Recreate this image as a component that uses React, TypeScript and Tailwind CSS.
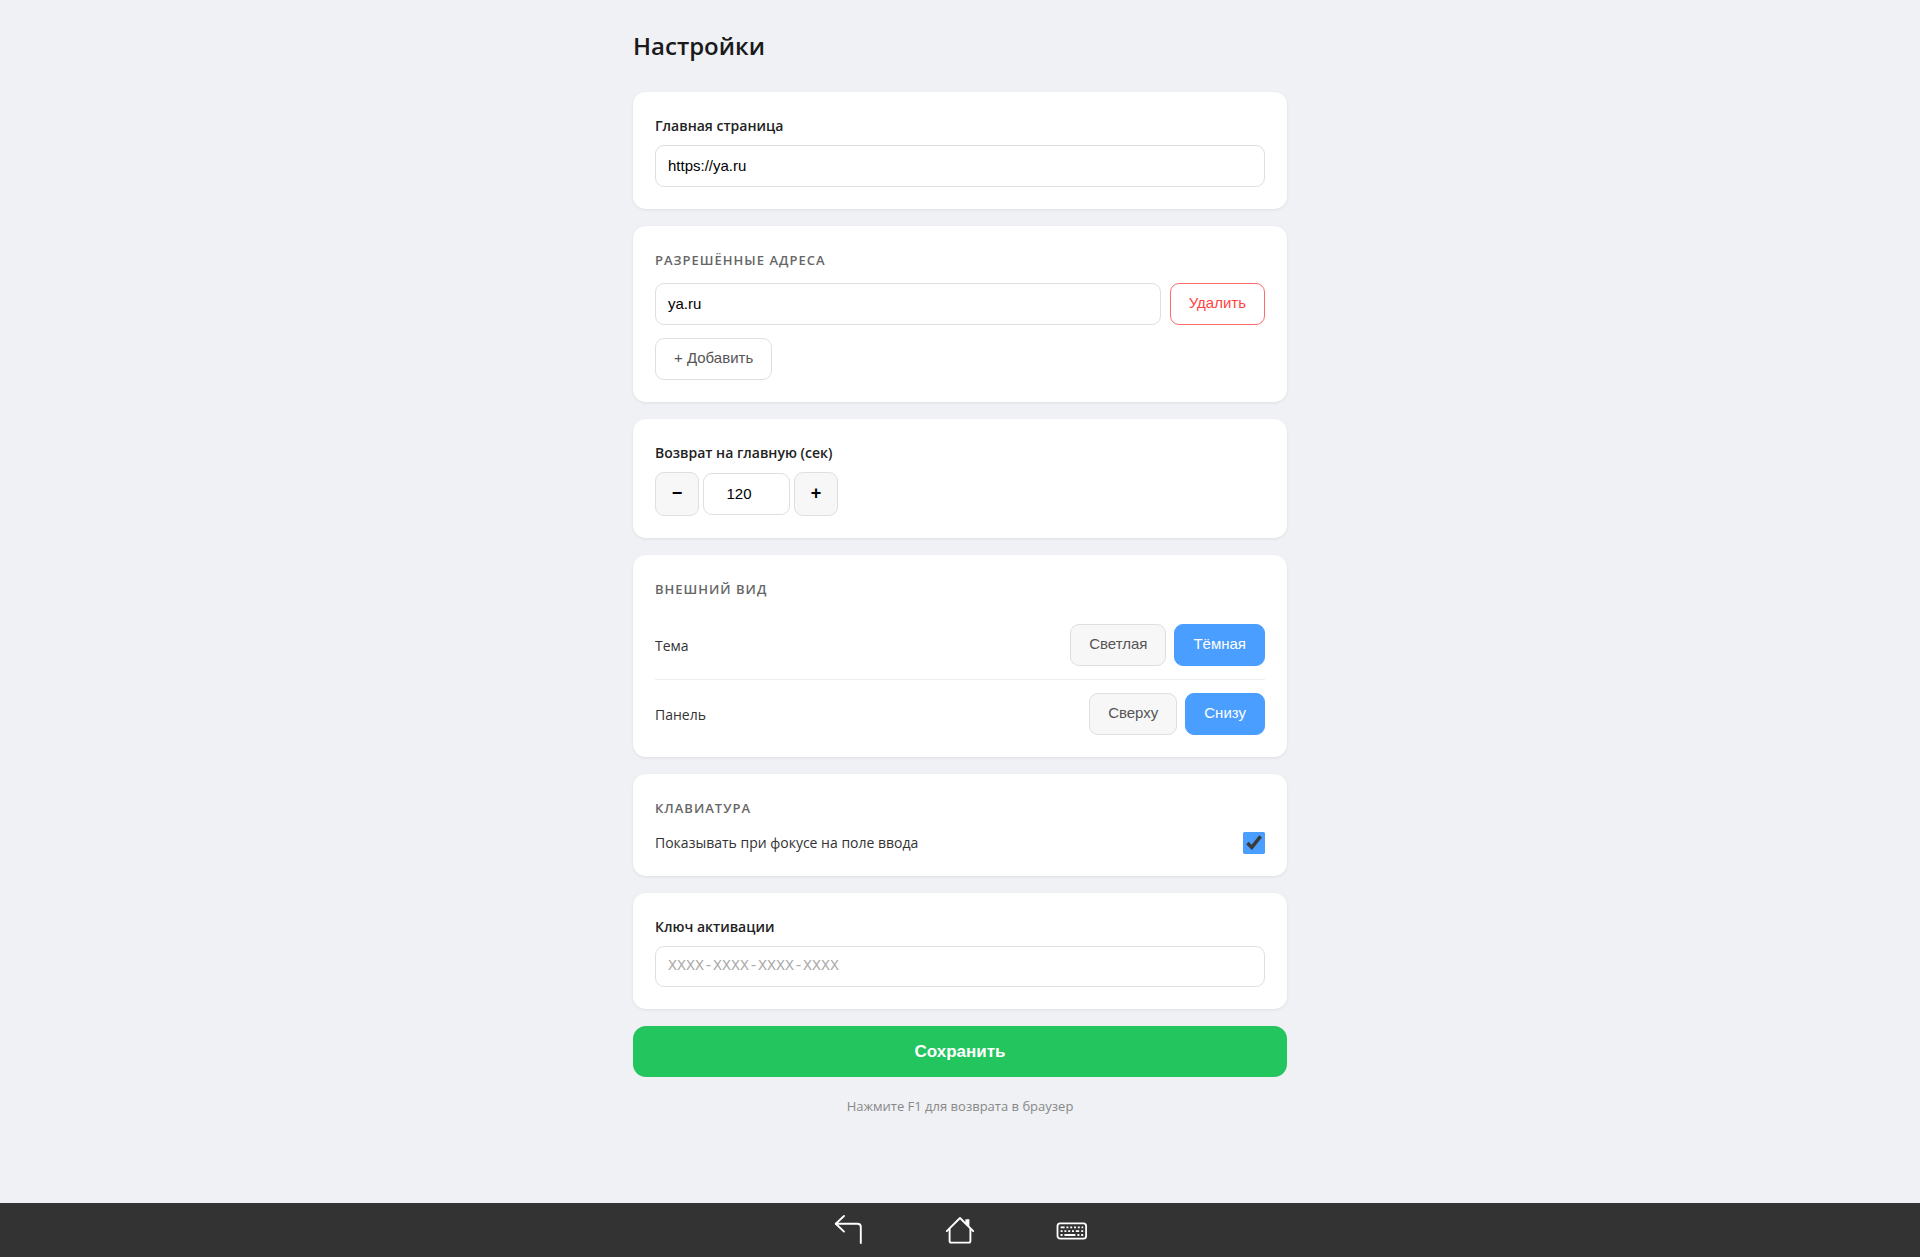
import { useState } from "react"
import type { ReactNode } from "react"
import clsx from "clsx"

const inputClass =
    "h-[42px] min-w-0 rounded-[9px] border border-[#dfdfdf] bg-white px-3 pb-0.5 font-['Liberation_Sans',sans-serif] text-[15px] text-black outline-none focus:border-[#4a9eff]"

const buttonClass =
    "h-[42px] shrink-0 cursor-pointer rounded-[9px] border px-[18px] pb-0.5 font-['Liberation_Sans',sans-serif] text-[15px]"

const stepClass =
    "size-11 cursor-pointer rounded-[9px] border border-[#dfdfdf] bg-[#f7f7f7] pb-0.5 font-['Liberation_Sans',sans-serif] text-[18px] font-bold text-black"

function Card({ children }: { children: ReactNode }) {
    return <section className="rounded-[13px] bg-white p-[22px] shadow-[0_1px_3px_rgba(0,0,0,0.08)]">{children}</section>
}

function FieldLabel({ htmlFor, children }: { htmlFor: string; children: ReactNode }) {
    return (
        <label htmlFor={htmlFor} className="mb-[7px] block text-[14px] leading-6 font-semibold text-[#222]">
            {children}
        </label>
    )
}

function SectionTitle({ children }: { children: ReactNode }) {
    return <h2 className="mb-[11px] text-[13px] leading-6 font-semibold tracking-[1px] text-[#666] uppercase">{children}</h2>
}

interface ToggleRowProps {
    label: string
    options: string[]
    value: string
    onChange: (value: string) => void
}

function ToggleRow({ label, options, value, onChange }: ToggleRowProps) {
    return (
        <div
            role="group"
            aria-label={label}
            className="flex items-center justify-between border-b border-[#eee] py-[13px] first:pt-3 last:border-b-0 last:pb-0"
        >
            <span className="text-[14px] text-[#333]">{label}</span>
            <div className="flex gap-2">
                {options.map((option) => (
                    <button
                        key={option}
                        type="button"
                        aria-pressed={option === value}
                        onClick={() => onChange(option)}
                        className={clsx(
                            buttonClass,
                            option === value ? "border-[#4a9eff] bg-[#4a9eff] text-white" : "border-[#dfdfdf] bg-[#f7f7f7] text-[#555]"
                        )}
                    >
                        {option}
                    </button>
                ))}
            </div>
        </div>
    )
}

function BackIcon() {
    return (
        <svg width="32" height="32" viewBox="0 0 32 32" fill="none" stroke="currentColor" strokeWidth="1.9" strokeLinecap="round" strokeLinejoin="round">
            <path d="M12 2 3.8 9.8 12 17.6" />
            <path d="M3.8 9.8H25.5Q28.8 9.8 28.8 13V29" />
        </svg>
    )
}

function HomeIcon() {
    return (
        <svg width="32" height="32" viewBox="0 0 32 32" fill="none" stroke="currentColor" strokeWidth="1.9" strokeLinecap="round" strokeLinejoin="round">
            <path d="M2.8 17.2 16 4 29.2 17.2" />
            <path d="M5.6 15V27Q5.6 28.6 7.2 28.6H24.8Q26.4 28.6 26.4 27V15" />
            <path d="M21.4 5.2H25.4V13L21.4 9Z" fill="currentColor" stroke="none" />
        </svg>
    )
}

function KeyboardIcon() {
    return (
        <svg width="32" height="32" viewBox="0 0 32 32" fill="none" stroke="currentColor" strokeWidth="1.8">
            <rect x="1.5" y="9.3" width="28.6" height="15.4" rx="2.6" />
            <path d="M4.6 13.3h4M10.4 13.3h2M14.2 13.3h2M18 13.3h2M21.8 13.3h2M25.6 13.3h1.6" />
            <path d="M4.6 17.1h2M8.4 17.1h2M12.2 17.1h2M16 17.1h2M19.8 17.1h3.4M25.2 17.1h2" />
            <path d="M4.6 21h2M8.4 21h11M21.4 21h2M25.2 21h2" />
        </svg>
    )
}

export default function App() {
    const [homePage, setHomePage] = useState("https://ya.ru")
    const [addresses, setAddresses] = useState(["ya.ru"])
    const [timeout, setTimeoutSec] = useState(120)
    const [theme, setTheme] = useState("Тёмная")
    const [panel, setPanel] = useState("Снизу")
    const [showKeyboard, setShowKeyboard] = useState(true)
    const [licenseKey, setLicenseKey] = useState("")

    return (
        <div className="flex min-h-screen flex-col bg-[#f0f1f5] font-['Open_Sans','Noto_Sans',sans-serif]">
            <main className="mx-auto w-full max-w-[654px] grow pt-[26px] pb-10">
                <h1 className="mb-[26px] text-[24px] leading-10 font-semibold text-[#1a1a1a]">Настройки</h1>

                <form className="flex flex-col gap-[17px]" onSubmit={(e) => e.preventDefault()}>
                    <Card>
                        <FieldLabel htmlFor="home">Главная страница</FieldLabel>
                        <input id="home" type="text" value={homePage} onChange={(e) => setHomePage(e.target.value)} className={clsx(inputClass, "block w-full")} />
                    </Card>

                    <Card>
                        <SectionTitle>Разрешённые адреса</SectionTitle>
                        {addresses.map((address, i) => (
                            <div key={i} className="mb-[13px] flex gap-[9px]">
                                <input
                                    type="text"
                                    aria-label={`Адрес ${i + 1}`}
                                    value={address}
                                    onChange={(e) => setAddresses(addresses.map((a, j) => (j === i ? e.target.value : a)))}
                                    className={clsx(inputClass, "grow")}
                                />
                                <button
                                    type="button"
                                    onClick={() => setAddresses(addresses.filter((_, j) => j !== i))}
                                    className={clsx(buttonClass, "border-[#ff6b6b] bg-white text-[#ff4444]")}
                                >
                                    Удалить
                                </button>
                            </div>
                        ))}
                        <button type="button" onClick={() => setAddresses([...addresses, ""])} className={clsx(buttonClass, "block border-[#dfdfdf] bg-white text-[#555]")}>
                            + Добавить
                        </button>
                    </Card>

                    <Card>
                        <FieldLabel htmlFor="timeout">Возврат на главную (сек)</FieldLabel>
                        <div className="flex items-center gap-1">
                            <button type="button" aria-label="Меньше" onClick={() => setTimeoutSec(timeout - 10)} className={stepClass}>
                                −
                            </button>
                            <input
                                id="timeout"
                                type="number"
                                value={timeout}
                                onChange={(e) => setTimeoutSec(Number(e.target.value))}
                                className={clsx(inputClass, "w-[87px] text-center")}
                            />
                            <button type="button" aria-label="Больше" onClick={() => setTimeoutSec(timeout + 10)} className={stepClass}>
                                +
                            </button>
                        </div>
                    </Card>

                    <Card>
                        <SectionTitle>Внешний вид</SectionTitle>
                        <div>
                            <ToggleRow label="Тема" options={["Светлая", "Тёмная"]} value={theme} onChange={setTheme} />
                            <ToggleRow label="Панель" options={["Сверху", "Снизу"]} value={panel} onChange={setPanel} />
                        </div>
                    </Card>

                    <Card>
                        <SectionTitle>Клавиатура</SectionTitle>
                        <label className="flex items-center justify-between text-[14px] leading-[23px] text-[#333]">
                            Показывать при фокусе на поле ввода
                            <input type="checkbox" checked={showKeyboard} onChange={(e) => setShowKeyboard(e.target.checked)} className="size-[22px] accent-[#4a9eff]" />
                        </label>
                    </Card>

                    <Card>
                        <FieldLabel htmlFor="license">Ключ активации</FieldLabel>
                        <input
                            id="license"
                            type="text"
                            placeholder="XXXX-XXXX-XXXX-XXXX"
                            value={licenseKey}
                            onChange={(e) => setLicenseKey(e.target.value)}
                            className="block h-[41px] w-full rounded-[9px] border border-[#dfdfdf] bg-white px-3 font-['Liberation_Mono',monospace] text-[15px] text-black outline-none placeholder:text-[#aaa] focus:border-[#4a9eff]"
                        />
                    </Card>

                    <button type="submit" className="h-[51px] cursor-pointer rounded-[13px] bg-[#22c55e] font-['Liberation_Sans',sans-serif] text-[17px] font-bold text-white">
                        Сохранить
                    </button>
                </form>

                <p className="mt-[17px] text-center text-[13px] leading-6 text-[#888]">Нажмите F1 для возврата в браузер</p>
            </main>

            <nav className="flex h-[54px] items-center justify-center gap-14 bg-[#333] text-white">
                <button type="button" aria-label="Назад" className="flex w-14 justify-center">
                    <BackIcon />
                </button>
                <button type="button" aria-label="Домой" className="flex w-14 justify-center">
                    <HomeIcon />
                </button>
                <button type="button" aria-label="Клавиатура" className="flex w-14 justify-center">
                    <KeyboardIcon />
                </button>
            </nav>
        </div>
    )
}
